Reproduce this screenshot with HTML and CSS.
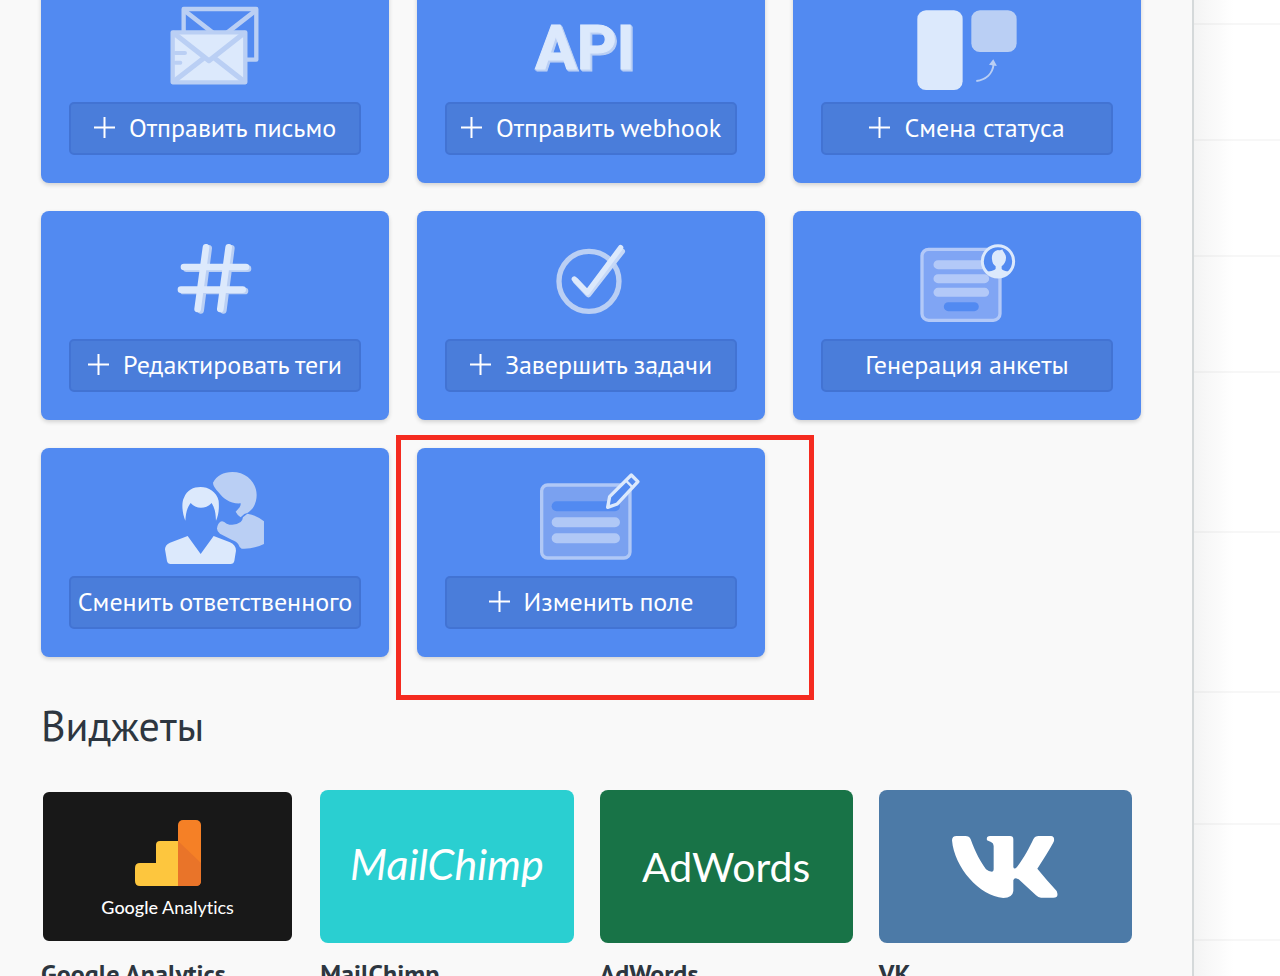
FILE: index.html
```html
<!DOCTYPE html>
<html lang="ru">
<head>
<meta charset="utf-8">
<title>Виджеты</title>
<link rel="stylesheet" href="styles.css">
</head>
<body>
<main class="panel">
  <section class="actions">
    <article class="card">
      <svg class="card-icon" viewBox="69 -26 292 128" aria-hidden="true">
        <g transform="translate(30 0) scale(.3333)" fill="none" stroke="#bacff4" stroke-width="13" stroke-linejoin="round" stroke-linecap="round">
          <rect x="461" y="27" width="218" height="152"/>
          <path d="M465 33 548 98M675 33 592 98" stroke-width="14"/>
          <rect x="428" y="97" width="218" height="150" fill="#dce9fc"/>
          <path d="M434 242 522 174M640 242 553 174M432 100 537 182 642 100" stroke-width="15"/>
          <path d="M437 159H465M437 188H451" stroke-width="12"/>
        </g>
      </svg>
      <button class="action" type="button"><svg class="plus" viewBox="0 0 21 21" aria-hidden="true"><path d="M10.500 0V21M0 10.500H21"/></svg>Отправить письмо</button>
    </article>
    <article class="card">
      <svg class="card-icon" viewBox="445 -26 292 128">
        <text class="api-text" x="535" y="69">API</text>
      </svg>
      <button class="action" type="button"><svg class="plus" viewBox="0 0 21 21" aria-hidden="true"><path d="M10.500 0V21M0 10.500H21"/></svg>Отправить webhook</button>
    </article>
    <article class="card">
      <svg class="card-icon" viewBox="821 -26 292 128" aria-hidden="true">
        <g transform="translate(780 0) scale(.3333)">
          <rect x="412" y="31" width="136" height="239" rx="26" fill="#dce9fc"/>
          <rect x="574" y="31" width="136" height="125" rx="26" fill="#bacff4"/>
          <path d="M589 243C617 239 638 222 641 192" fill="none" stroke="#bacff4" stroke-width="6"/>
          <path d="M640 178 627 194 651 198Z" fill="#bacff4"/>
        </g>
      </svg>
      <button class="action" type="button"><svg class="plus" viewBox="0 0 21 21" aria-hidden="true"><path d="M10.500 0V21M0 10.500H21"/></svg>Смена статуса</button>
    </article>

    <article class="card">
      <svg class="card-icon" viewBox="69 211 292 128" aria-hidden="true">
        <g transform="translate(30 205) scale(.3333)" fill="none" stroke-width="20" stroke-linecap="round">
          <path d="M536 130 512 316M604 130 580 316M470 191H654M460 258H645" stroke="#bacff4"/>
          <path d="M528 127 503 312M596 127 571 312M462 186H648M453 254H638" stroke="#dce9fc"/>
        </g>
      </svg>
      <button class="action" type="button"><svg class="plus" viewBox="0 0 21 21" aria-hidden="true"><path d="M10.500 0V21M0 10.500H21"/></svg>Редактировать теги</button>
    </article>
    <article class="card">
      <svg class="card-icon" viewBox="445 211 292 128" aria-hidden="true">
        <g transform="translate(410 205) scale(.3333)" fill="none" stroke-width="16" stroke-linecap="round" stroke-linejoin="round">
          <circle cx="537" cy="229" r="90" stroke="#bacff4"/>
          <path d="M497 227 535 268 636 139" stroke="#c6d8f7" stroke-width="18"/>
          <path d="M493 222 532 262 632 128" stroke="#dce9fc"/>
        </g>
      </svg>
      <button class="action" type="button"><svg class="plus" viewBox="0 0 21 21" aria-hidden="true"><path d="M10.500 0V21M0 10.500H21"/></svg>Завершить задачи</button>
    </article>
    <article class="card">
      <svg class="card-icon" viewBox="821 211 292 128" aria-hidden="true">
        <g transform="translate(780 205) scale(.3333)">
          <rect x="426" y="133" width="234" height="213" rx="20" fill="#80a5f4" stroke="#b3c9f8" stroke-width="10"/>
          <path d="M474 179H614M474 221H614M474 262H614" stroke="#b3c9f8" stroke-width="27" stroke-linecap="round"/>
          <path d="M505 305H583" stroke="#528af1" stroke-width="27" stroke-linecap="round"/>
          <circle cx="654" cy="169" r="48" fill="#528af1"/>
          <path d="M654 135C642 137 634 147 636 163C637 174 641 180 647 184V191C644 198 626 198 617 202Q633 218 654 218T692 202C683 198 667 198 665 191V184C673 179 679 168 678 156C677 145 668 140 667 133Q662 137 654 135Z" fill="#dce9fc"/>
          <circle cx="654" cy="169" r="47" fill="none" stroke="#dce9fc" stroke-width="9"/>
        </g>
      </svg>
      <button class="action" type="button">Генерация анкеты</button>
    </article>

    <article class="card">
      <svg class="card-icon" viewBox="69 448 292 128" aria-hidden="true">
        <g transform="translate(30 430) scale(.3333)" fill="#bacff4">
          <path d="M549 158C560 137 580 126 607 126C650 126 680 158 680 195C680 220 668 240 652 249L643 252 632 262Q622 255 617 245L629 232Q633 225 632 220C600 222 580 205 567 188Q549 170 549 158Z"/>
          <path d="M570 276Q578 269 590 281Q612 290 632 276Q638 271 639 262L652 251Q680 256 702 274V342Q670 358 635 356Q628 353 625 343Q620 334 605 329L570 311Q555 301 565 282Z"/>
          <g fill="#dce9fc">
            <path d="M466 272C455 245 455 215 462 203C471 180 490 171 512 171C535 171 560 185 566 212C568 235 566 255 558 272C557 250 555 235 545 219C525 240 497 237 482 219C470 235 468 250 466 272Z"/>
            <path d="M473 318 512 372 551 318 600 337Q618 345 618 362L613 393Q611 402 602 402H422Q413 402 411 393L405 358Q405 345 420 338Z"/>
          </g>
        </g>
      </svg>
      <button class="action" type="button">Сменить ответственного</button>
    </article>
    <article class="card card-marked">
      <svg class="card-icon" viewBox="445 448 292 128" aria-hidden="true">
        <g transform="translate(390 430) scale(.3333)" stroke-linecap="round">
          <rect x="455" y="165" width="265" height="219" rx="18" fill="#7aa1f0" stroke="#b0c8f6" stroke-width="10"/>
          <path d="M500 229H675" stroke="#528af1" stroke-width="30"/>
          <path d="M500 277H675M500 325H675" stroke="#b0c8f6" stroke-width="30"/>
          <path d="M724 135 744 155 682 222 653 232 659 200Z" fill="#528af1" stroke="#dce9fc" stroke-width="10" stroke-linejoin="round"/>
          <path d="M708 152 728 172" stroke="#dce9fc" stroke-width="7"/>
        </g>
      </svg>
      <button class="action" type="button"><svg class="plus" viewBox="0 0 21 21" aria-hidden="true"><path d="M10.500 0V21M0 10.500H21"/></svg>Изменить поле</button>
    </article>
  </section>

  <h2 class="heading">Виджеты</h2>

  <section class="widgets">
    <article class="widget">
      <div class="tile tile-analytics">
        <svg class="bars" viewBox="0 0 66 66" aria-hidden="true">
          <path d="M44 21H25Q21 21 21 25V43H5Q0 43 0 48V61Q0 66 5 66H44Z" fill="#fdc63e"/>
          <rect x="43" y="0" width="23" height="66" rx="5" fill="#f58026"/>
          <path d="M43 21 66 43V61Q66 66 61 66H43Z" fill="#e97429"/>
        </svg>
        <span class="analytics-name"><b>Google</b> Analytics</span>
      </div>
      <h3 class="widget-name">Google Analytics</h3>
    </article>
    <article class="widget">
      <div class="tile tile-mailchimp"><span class="mailchimp-name">MailChimp</span></div>
      <h3 class="widget-name">MailChimp</h3>
    </article>
    <article class="widget">
      <div class="tile tile-adwords"><span class="adwords-name">AdWords</span></div>
      <h3 class="widget-name">AdWords</h3>
    </article>
    <article class="widget">
      <div class="tile tile-vk">
        <svg class="vk" viewBox="248 165 318 186" role="img" aria-label="VK">
          <path fill="#fff" d="M262 165H288Q300 165 304 175C318 215 335 245 350 265Q358 272 368 272Q373 272 373 265V195Q373 186 365 183L353 178Q350 165 362 165H422Q432 165 432 175V258Q434 267 443 258C465 230 480 200 492 175Q497 165 508 165H545Q556 165 554 180Q545 200 504 263Q530 295 562 330Q570 350 552 350H515Q507 350 500 343L448 295Q435 288 432 298V330Q430 350 402 351C330 345 255 260 248 178Q248 165 262 165Z"/>
        </svg>
      </div>
      <h3 class="widget-name">VK</h3>
    </article>
  </section>
</main>
<aside class="backdrop" aria-hidden="true">
  <div class="row row-first"></div>
  <div class="row"></div>
  <div class="row"></div>
  <div class="row"></div>
  <div class="row row-tall"></div>
  <div class="row row-tall"></div>
  <div class="row row-medium"></div>
  <div class="row"></div>
</aside>
</body>
</html>
```
FILE: styles.css
```css
* {
  box-sizing: border-box;
}

body {
  margin: 0;
  height: 100vh;
  display: flex;
  overflow: hidden;
  background: #fff;
  color: #2d3640;
  font-family: "PT Sans", "Noto Sans", sans-serif;
}

.panel {
  flex: 1;
  min-width: 0;
  padding: 0 51px 0 41px;
  background: #f9f9f9;
  border-right: 2px solid #d5d9da;
}

/* The list is scrolled a little past its first row. */
.actions {
  display: grid;
  grid-template-columns: repeat(3, 1fr);
  gap: 28px;
  margin-top: -26px;
}

.card {
  position: relative;
  display: flex;
  flex-direction: column;
  padding: 0 28px 28px;
  background: #528af1;
  border-radius: 8px;
  box-shadow: 0 2px 4px rgba(0, 0, 0, 0.16);
}

.card-icon {
  width: 100%;
  height: 128px;
}

.api-text {
  fill: #dce9fc;
  stroke: #dce9fc;
  font-family: Roboto, sans-serif;
  font-size: 62px;
  font-weight: 700;
  filter: drop-shadow(1px 1px 0 #bacff4) drop-shadow(1px 1px 0 #bacff4);
}

.action {
  display: flex;
  align-items: center;
  justify-content: center;
  gap: 14px;
  height: 53px;
  padding: 0 0 2px;
  border: 2px solid #4273d3;
  border-radius: 5px;
  background: #4a7dda;
  color: #fff;
  font: inherit;
  font-size: 26px;
  white-space: nowrap;
}

.plus {
  flex: none;
  width: 21px;
  height: 21px;
  stroke: #fff;
  stroke-width: 2;
}

.card-marked::after {
  content: "";
  position: absolute;
  inset: -13px -49px -43px -21px;
  border: 5px solid #f52b20;
}

.heading {
  margin: 42px 0 37px;
  font-size: 42px;
  font-weight: 400;
  line-height: 54px;
}

.widgets {
  display: grid;
  grid-template-columns: repeat(4, 1fr);
  gap: 26px;
  margin-right: 9px;
}

.tile {
  display: flex;
  flex-direction: column;
  align-items: center;
  justify-content: center;
  height: 153px;
  border-radius: 8px;
  color: #fff;
}

.tile-analytics {
  gap: 8px;
  padding-top: 6px;
  border: 2px solid #f9f9f9;
  background: #181818;
}

.bars {
  width: 66px;
  height: 66px;
}

.analytics-name {
  font-family: Lato, sans-serif;
  font-size: 18px;
  font-variant-ligatures: none;
  line-height: 26px;
}

.analytics-name b {
  font-weight: 500;
}

.tile-mailchimp {
  padding-bottom: 6px;
  background: #2acfd1;
}

.mailchimp-name {
  font-family: Lato, sans-serif;
  font-size: 43px;
  font-style: italic;
  font-weight: 400;
}

.tile-adwords {
  background: #187347;
}

.adwords-name {
  font-family: Lato, sans-serif;
  font-size: 41px;
}

.tile-vk {
  background: #4c7aa7;
}

.vk {
  width: 106px;
  height: 62px;
}

.widget-name {
  margin: 15px 0 0;
  font-size: 26px;
  font-weight: 700;
  line-height: 32px;
}

.backdrop {
  width: 86px;
  background: linear-gradient(to right, #f4f4f4, #fff 40px);
}

.row {
  height: 116px;
  border-bottom: 2px solid rgba(0, 0, 0, 0.03);
}

.row-first {
  height: 25px;
}

.row-tall {
  height: 160px;
}

.row-medium {
  height: 132px;
}
```
